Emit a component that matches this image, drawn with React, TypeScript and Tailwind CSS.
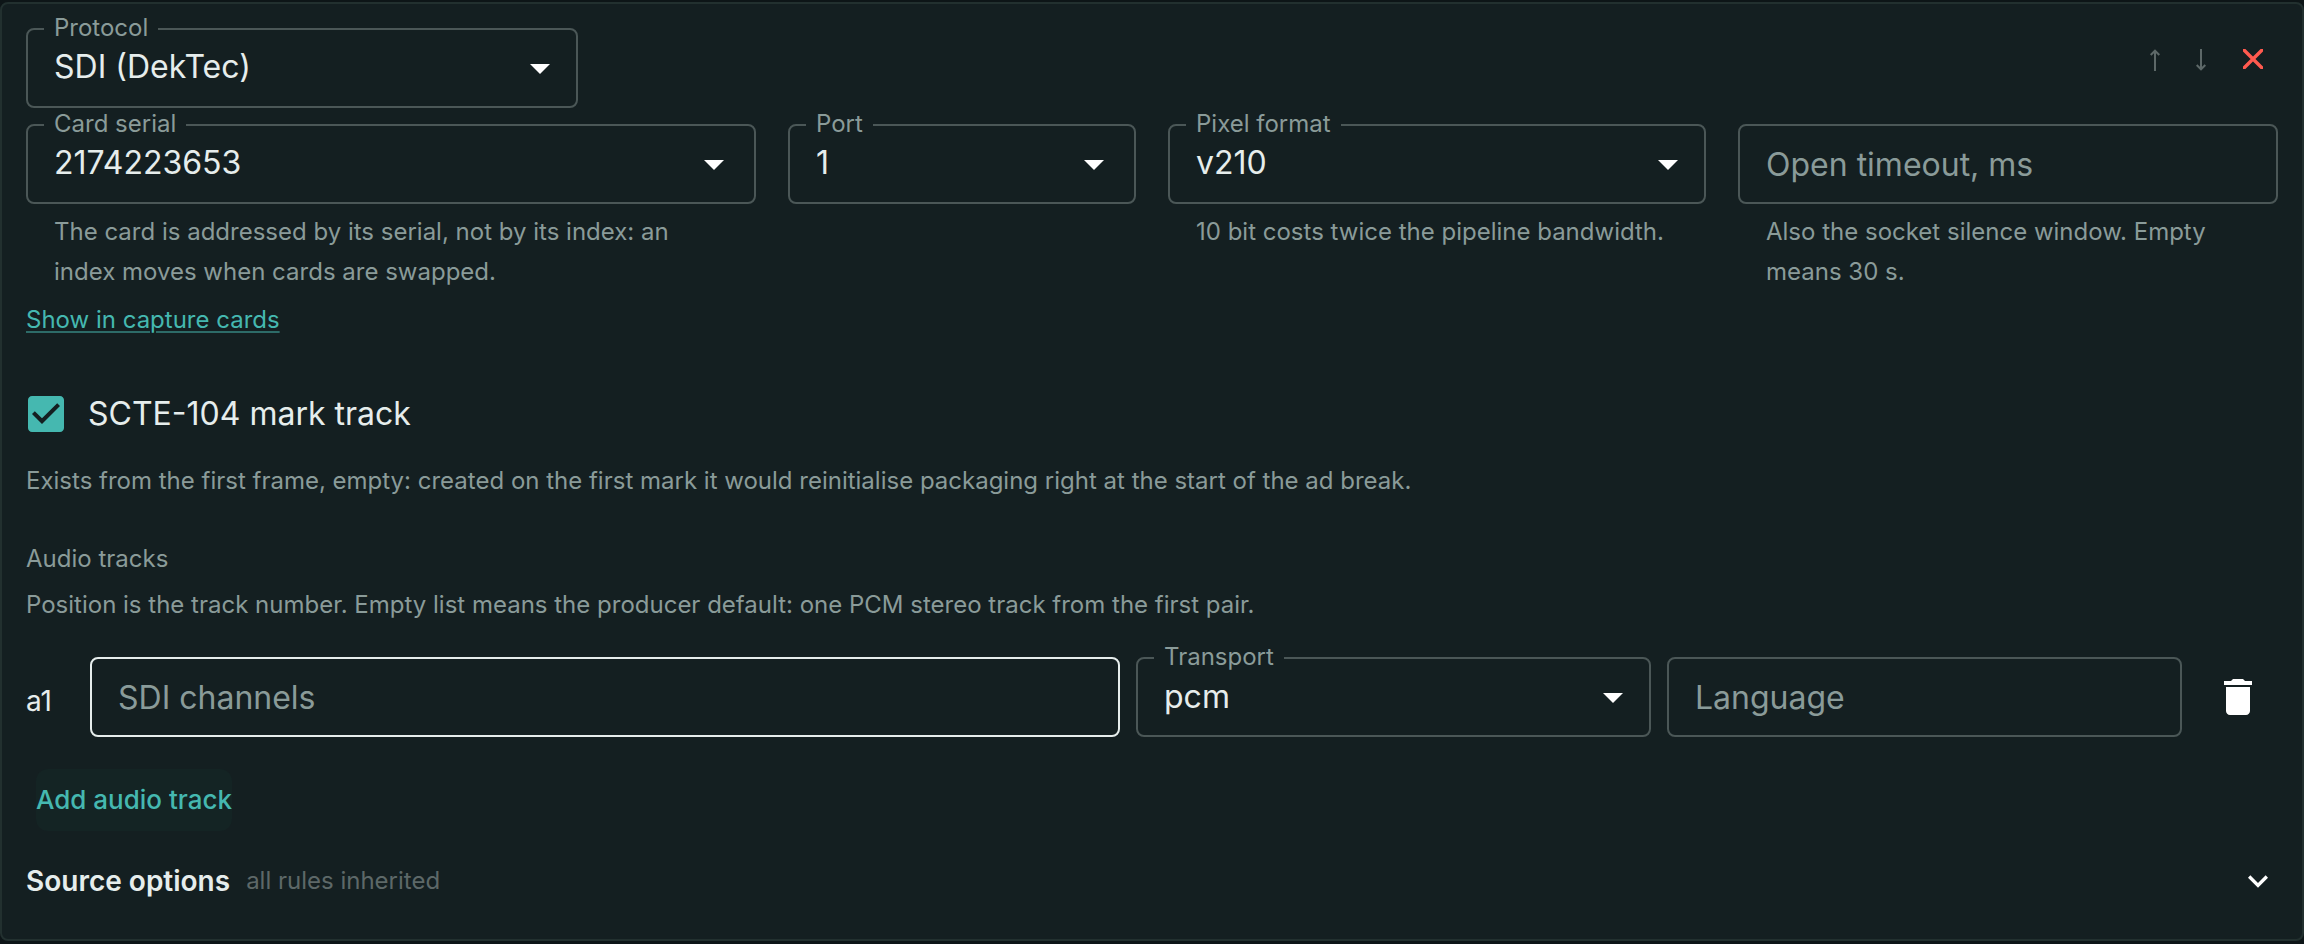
import { useState, type ReactNode } from "react";

const frame =
  "block h-20 w-full appearance-none rounded-lg border-2 bg-transparent pl-[26px] text-[32px] leading-10 outline-none";

function SelectField({
  id,
  label,
  options,
  hint,
  valueClass = "pb-[2px]",
  arrowClass = "right-[14px]",
}: {
  id: string;
  label: string;
  options: string[];
  hint?: string;
  valueClass?: string;
  arrowClass?: string;
}) {
  return (
    <div className="min-w-0">
      <div className="relative">
        <select id={id} className={`${frame} border-[#4b5757] pr-16 text-[#e6edec] ${valueClass}`}>
          {options.map((o) => (
            <option key={o}>{o}</option>
          ))}
        </select>
        <label
          htmlFor={id}
          className="absolute -top-4 left-[18px] bg-[#141f21] px-[10px] text-[24px] leading-8 text-[#8a9b99]"
        >
          {label}
        </label>
        <svg
          viewBox="0 0 24 24"
          className={`pointer-events-none absolute top-4 size-12 fill-white ${arrowClass}`}
          aria-hidden="true"
        >
          <path d="M7 10l5 5 5-5z" />
        </svg>
      </div>
      {hint && <Hint>{hint}</Hint>}
    </div>
  );
}

function TextField({
  label,
  hint,
  active = false,
}: {
  label: string;
  hint?: string;
  active?: boolean;
}) {
  return (
    <div className="min-w-0">
      <input
        type="text"
        aria-label={label}
        placeholder={label}
        className={`${frame} pr-[26px] text-[#e6edec] placeholder:text-[#8a9b99] placeholder:opacity-100 ${
          active ? "border-[#e6edec]" : "border-[#4b5757]"
        }`}
      />
      {hint && <Hint>{hint}</Hint>}
    </div>
  );
}

function Hint({ children }: { children: ReactNode }) {
  return <p className="mx-7 mt-2 text-[24px] leading-10 text-[#8a9b99]">{children}</p>;
}

export default function App() {
  const [marks, setMarks] = useState(true);

  return (
    <div className="min-h-screen bg-[#0d1517] py-[2px] font-['Inter','Liberation_Sans',sans-serif] text-[#e6edec]">
      <section className="rounded-lg border-2 border-[#22302f] bg-[#141f21] px-6 pt-6 pb-9">
        <header className="flex items-start justify-between">
          <div className="w-[552px]">
            <SelectField id="protocol" label="Protocol" options={["SDI (DekTec)"]} />
          </div>
          <div className="flex items-center gap-2 pt-3">
            <button
              type="button"
              disabled
              aria-label="Move up"
              className="flex h-10 w-[38px] items-center justify-center"
            >
              <svg viewBox="0 0 10 22" className="h-[22px] w-[10px] fill-none stroke-[#5d6868] stroke-2">
                <path d="M5 22V1.500M0.700 6L5 1.700L9.300 6" />
              </svg>
            </button>
            <button
              type="button"
              disabled
              aria-label="Move down"
              className="flex h-10 w-[38px] items-center justify-center"
            >
              <svg viewBox="0 0 10 22" className="h-[22px] w-[10px] fill-none stroke-[#5d6868] stroke-2">
                <path d="M5 0V20.500M0.700 16L5 20.300L9.300 16" />
              </svg>
            </button>
            <button
              type="button"
              aria-label="Remove source"
              className="flex h-10 w-[50px] items-center justify-center pb-[2px]"
            >
              <svg viewBox="0 0 20 20" className="size-5 fill-none stroke-[#ff5a4f] stroke-[3.400]">
                <path d="M1.200 1.200l17.600 17.600M18.800 1.200L1.200 18.800" strokeLinecap="square" />
              </svg>
            </button>
          </div>
        </header>

        <div className="mt-4 grid grid-cols-[730fr_348fr_538fr_540fr] gap-x-8">
          <SelectField
            id="serial"
            label="Card serial"
            options={["2174223653"]}
            arrowClass="right-[18px]"
            hint="The card is addressed by its serial, not by its index: an index moves when cards are swapped."
          />
          <SelectField id="port" label="Port" options={["1"]} arrowClass="right-[18px]" />
          <SelectField
            id="format"
            label="Pixel format"
            options={["v210"]}
            hint="10 bit costs twice the pipeline bandwidth."
          />
          <TextField label="Open timeout, ms" hint="Also the socket silence window. Empty means 30 s." />
        </div>

        <div className="mt-2 flex">
          <a
            href="#capture-cards"
            className="text-[24px] leading-10 text-[#45b8b0] underline decoration-[#45b8b0]/50 decoration-2 underline-offset-[3px]"
          >
            Show in capture cards
          </a>
        </div>

        <label className="mt-[50px] -ml-1 flex w-fit items-center gap-[18px] text-[32px] leading-12">
          <input
            type="checkbox"
            className="peer sr-only"
            checked={marks}
            onChange={(e) => setMarks(e.target.checked)}
          />
          <svg viewBox="0 0 24 24" className="size-12 fill-[#45b8b0]" aria-hidden="true">
            {marks ? (
              <path d="M19 3H5c-1.110 0-2 .9-2 2v14c0 1.100.89 2 2 2h14c1.110 0 2-.9 2-2V5c0-1.100-.89-2-2-2zm-9 14l-5-5 1.410-1.410L10 14.170l7.590-7.590L19 8l-9 9z" />
            ) : (
              <path d="M19 5v14H5V5h14m0-2H5c-1.100 0-2 .9-2 2v14c0 1.100.9 2 2 2h14c1.100 0 2-.9 2-2V5c0-1.100-.9-2-2-2z" />
            )}
          </svg>
          SCTE-104 mark track
        </label>

        <p className="mt-[23px] text-[24px] leading-10 text-[#8a9b99]">
          Exists from the first frame, empty: created on the first mark it would reinitialise packaging right at the
          start of the ad break.
        </p>

        <h3 className="mt-[38px] text-[24px] leading-10 text-[#8a9b99]">Audio tracks</h3>
        <p className="mt-[6px] text-[24px] leading-10 text-[#8a9b99]">
          Position is the track number. Empty list means the producer default: one PCM stereo track from the first pair.
        </p>

        <div className="mt-8 flex items-center">
          <span className="w-16 pt-2 text-[28px] leading-10">a1</span>
          <div className="grid flex-1 grid-cols-[2fr_1fr_1fr] gap-x-4">
            <TextField label="SDI channels" active />
            <SelectField id="transport" label="Transport" options={["pcm"]} valueClass="pb-0" />
            <TextField label="Language" />
          </div>
          <button type="button" aria-label="Delete track" className="ml-4 flex size-20 items-center justify-center">
            <svg viewBox="0 0 24 24" className="size-12 fill-white">
              <path d="M6 19c0 1.100.9 2 2 2h8c1.100 0 2-.9 2-2V7H6v12zM19 4h-3.500l-1-1h-5l-1 1H5v2h14V4z" />
            </svg>
          </button>
        </div>

        <button
          type="button"
          className="mt-8 ml-[10px] block h-[62px] rounded-xl bg-[#142424] text-[26px] leading-10 font-medium text-[#45b8b0]"
        >
          Add audio track
        </button>

        <button type="button" className="mt-7 flex w-full items-center text-left">
          <span className="text-[28px] leading-11 font-semibold">Source options</span>
          <span className="ml-4 flex-1 text-[24px] leading-10 text-[#5d6868]">all rules inherited</span>
          <svg viewBox="0 0 24 24" className="size-10 fill-white" aria-hidden="true">
            <path d="M16.590 8.590L12 13.170 7.410 8.590 6 10l6 6 6-6z" />
          </svg>
        </button>
      </section>
    </div>
  );
}
